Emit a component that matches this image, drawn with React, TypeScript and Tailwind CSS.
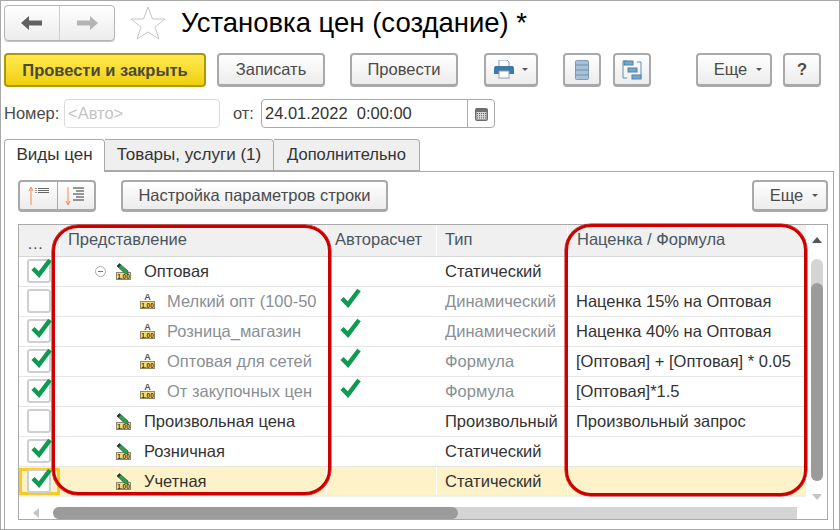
import type { ReactNode } from "react";

const rows = [
  { level: 0, tree: true, on: true, icon: "pen", name: "Оптовая", auto: false, type: "Статический", formula: "" },
  { level: 1, on: false, icon: "a", name: "Мелкий опт (100-50", auto: true, type: "Динамический", formula: "Наценка 15% на Оптовая" },
  { level: 1, on: true, icon: "a", name: "Розница_магазин", auto: true, type: "Динамический", formula: "Наценка 40% на Оптовая" },
  { level: 1, on: true, icon: "a", name: "Оптовая для сетей", auto: true, type: "Формула", formula: "[Оптовая] + [Оптовая] * 0.05" },
  { level: 1, on: true, icon: "a", name: "От закупочных цен", auto: true, type: "Формула", formula: "[Оптовая]*1.5" },
  { level: 0, on: false, icon: "pen", name: "Произвольная цена", auto: false, type: "Произвольный", formula: "Произвольный запрос" },
  { level: 0, on: true, icon: "pen", name: "Розничная", auto: false, type: "Статический", formula: "" },
  { level: 0, on: true, icon: "pen", name: "Учетная", auto: false, type: "Статический", formula: "", current: true },
];

const Check = ({ className }: { className: string }) => (
  <svg viewBox="0 0 21 21" className={className}>
    <path d="M2 11.5 L8 17.5 L19 3" fill="none" stroke="#0e9a50" strokeWidth="4.5" />
  </svg>
);

const PriceTag = () => (
  <svg width="15" height="8" viewBox="0 0 15 8" className="block shrink-0">
    <rect x="0.5" y="0.5" width="14" height="7" fill="#f5dc78" stroke="#8a8a6a" />
    <text x="7.5" y="6.5" textAnchor="middle" fontSize="6.5" fontWeight="700" fontFamily="Liberation Sans" fill="#333">1.00</text>
  </svg>
);

const RowIcon = ({ kind }: { kind: string }) =>
  kind === "pen" ? (
    <div className="relative w-[15px] h-[17px] flex flex-col justify-end shrink-0">
      <svg width="13" height="12" viewBox="0 0 13 12" className="absolute left-0 top-0">
        <path d="M1 3 L3.5 0.5 L12 8 L12 11 L9 10.5 Z" fill="#2f9e4f" stroke="#1f5f35" strokeWidth="0.7" />
        <path d="M1 3 L3.5 0.5 L5 2 L2.5 4.5 Z" fill="#333" />
      </svg>
      <PriceTag />
    </div>
  ) : (
    <div className="w-[15px] h-[15px] flex flex-col items-center justify-end shrink-0">
      <span className="text-[9px] leading-[8px] font-bold text-[#555]">A</span>
      <PriceTag />
    </div>
  );

const Btn = ({ className, children }: { className: string; children: ReactNode }) => (
  <div
    className={`shrink-0 flex items-center justify-center rounded-[4px] border-2 border-b-[3px] border-[#a9a9a9] bg-gradient-to-b from-white to-[#ececec] text-[16.5px] text-[#4a4a4a] ${className}`}
  >
    {children}
  </div>
);

const Caret = () => <span className="w-0 h-0 border-x-[3px] border-x-transparent border-t-[3px] border-t-[#555]" />;

export default function App() {
  return (
    <div className="relative w-[840px] h-[530px] overflow-hidden bg-white border border-[#a9a9a9] font-['Liberation_Sans',Arial,sans-serif]">
      {/* Header */}
      <div className="flex items-center h-[36px] mt-[4px] ml-[3px]">
        <div className="w-[111px] h-[36px] flex rounded-[4px] border border-[#b4b4b4] bg-gradient-to-b from-white to-[#ececec] shadow-[0_1px_0_#c4c4c4]">
          <div className="w-[55px] flex items-center justify-center border-r border-[#cfcfcf]">
            <svg width="22" height="14" viewBox="0 0 22 14">
              <path d="M0 7 L8 0 V4.5 H21 V9.5 H8 V14 Z" fill="#606060" />
            </svg>
          </div>
          <div className="flex-1 flex items-center justify-center">
            <svg width="22" height="14" viewBox="0 0 22 14">
              <path d="M22 7 L14 0 V4.5 H1 V9.5 H14 V14 Z" fill="#b4b4b4" />
            </svg>
          </div>
        </div>
        <svg width="36" height="34" viewBox="0 0 36 34" className="ml-[15px]">
          <path d="M18 1 L22.5 13 L35 13 L25 21 L29 33 L18 26 L7 33 L11 21 L1 13 L13.5 13 Z" fill="white" stroke="#c4c4c4" />
        </svg>
        <h1 className="ml-[15px] text-[27.5px] leading-[36px] text-black">Установка цен (создание) *</h1>
      </div>

      {/* Command bar */}
      <div className="flex mt-[12px] ml-[3px]">
        <div className="w-[202px] h-[34px] flex items-center justify-center rounded-[4px] border-2 border-[#b0960a] bg-gradient-to-b from-[#ffe94a] to-[#f0d000] text-[16.5px] font-bold text-[#4a4a3a]">
          Провести и закрыть
        </div>
        <Btn className="w-[108px] h-[34px] ml-[11px]">Записать</Btn>
        <Btn className="w-[108px] h-[34px] ml-[25px]">Провести</Btn>
        <Btn className="w-[54px] h-[34px] ml-[26px] gap-[8px]">
          <svg width="20" height="19" viewBox="0 0 20 19">
            <path d="M5 0 H13 L15 2 V7 H5 Z" fill="white" stroke="#8aa0b5" />
            <path d="M2 6 H18 Q20 6 20 8 V14 H15 V11 H5 V14 H0 V8 Q0 6 2 6 Z" fill="#3f79a8" />
            <rect x="5" y="11" width="10" height="7" fill="white" stroke="#8aa0b5" />
          </svg>
          <Caret />
        </Btn>
        <Btn className="w-[38px] h-[34px] ml-[25px]">
          <svg width="14" height="20" viewBox="0 0 14 20">
            <rect x="0.5" y="0.5" width="13" height="19" rx="1" fill="#a9c1d6" stroke="#7d9cb6" />
            <path d="M0 5 H14 M0 10 H14 M0 15 H14" stroke="#6f90ab" />
          </svg>
        </Btn>
        <Btn className="w-[38px] h-[34px] ml-[12px]">
          <svg width="20" height="20" viewBox="0 0 20 20">
            <path d="M5 1 H1 V18 H5 M15 2 H19 V18 H15" fill="none" stroke="#5f8fb5" />
            <rect x="2" y="1" width="9" height="4" fill="#7aa5c8" stroke="#4f82ab" />
            <rect x="6" y="8" width="9" height="4" fill="#7aa5c8" stroke="#4f82ab" />
            <rect x="10" y="15" width="9" height="4" fill="#7aa5c8" stroke="#4f82ab" />
          </svg>
        </Btn>
        <Btn className="w-[76px] h-[34px] ml-[45px] gap-[9px] pl-[8px]">
          Еще <Caret />
        </Btn>
        <Btn className="w-[38px] h-[34px] ml-[11px] font-bold">?</Btn>
      </div>

      {/* Number and date */}
      <div className="flex items-center h-[29px] mt-[12px] ml-[3px] text-[16.5px] text-[#4a4a4a]">
        <span className="w-[60px]">Номер:</span>
        <div className="w-[156px] h-[29px] flex items-center pl-[3px] rounded-[4px] border border-[#dcdcdc] text-[#c4c4c4]">&lt;Авто&gt;</div>
        <span className="ml-[13px] w-[28px]">от:</span>
        <div className="w-[234px] h-[29px] flex rounded-[4px] border border-[#a9a9a9] text-[#333]">
          <span className="flex-1 flex items-center pl-[3px] whitespace-pre">24.01.2022  0:00:00</span>
          <span className="w-[27px] flex items-center justify-center border-l border-[#a9a9a9]">
            <svg width="13" height="14" viewBox="0 0 13 14">
              <rect x="0" y="1" width="13" height="13" rx="2" fill="#6e6e6e" />
              <rect x="1.5" y="5" width="10" height="7.5" fill="#d8d8d8" />
              <path d="M2 6.5 H11 M2 8.7 H11 M2 10.9 H11" stroke="#555" strokeDasharray="1 1" />
            </svg>
          </span>
        </div>
      </div>

      {/* Tabs */}
      <div className="flex h-[33px] mt-[11px] ml-[3px] text-[16.5px] text-[#333] relative z-10">
        <div className="w-[101px] h-[33px] pb-[2px] flex items-center justify-center bg-white border border-b-0 border-[#a9a9a9] rounded-t-[4px] text-[17px]">Виды цен</div>
        <div className="w-[169px] h-[32px] pb-[1px] flex items-center justify-center bg-[#efefef] border border-l-0 border-[#a9a9a9] rounded-tr-[4px] text-[17px]">Товары, услуги (1)</div>
        <div className="w-[146px] h-[32px] pb-[1px] flex items-center justify-center bg-[#efefef] border border-l-0 border-[#a9a9a9] rounded-tr-[4px]">Дополнительно</div>
      </div>

      {/* Tab page */}
      <div className="w-[830px] h-[358px] ml-[3px] -mt-[1px] border border-b-0 border-[#a9a9a9] pl-[13px] pr-[5px] pt-[8px]">
        <div className="flex">
          <div className="w-[78px] h-[32px] shrink-0 flex rounded-[4px] border-2 border-b-[3px] border-[#a9a9a9] bg-gradient-to-b from-white to-[#ececec]">
            <div className="w-[38px] flex items-center justify-center border-r border-[#a9a9a9]">
              <svg width="24" height="20" viewBox="0 0 24 20">
                <path d="M4 19 V2 M2 5 L4 1 L6 5" fill="none" stroke="#f08a4a" />
                <path d="M11 2.5 H22 M11 4.5 H22 M11 6.5 H22" stroke="#666" />
                <path d="M8 2.5 H10 M8 4.5 H10 M8 6.5 H10" stroke="#999" />
              </svg>
            </div>
            <div className="flex-1 flex items-center justify-center">
              <svg width="24" height="20" viewBox="0 0 24 20">
                <path d="M4 1 V18 M2 15 L4 19 L6 15" fill="none" stroke="#f08a4a" />
                <path d="M9 2 H20 M12 5 H20 M9 8 H20 M12 11 H20 M9 14 H20" stroke="#777" strokeWidth="1.5" />
              </svg>
            </div>
          </div>
          <Btn className="w-[267px] ml-[25px] h-[32px]">Настройка параметров строки</Btn>
          <Btn className="w-[76px] ml-[364px] h-[32px] gap-[9px] pl-[8px]">
            Еще <Caret />
          </Btn>
        </div>

        {/* Table */}
        <div className="relative w-[810px] h-[296px] mt-[12px] border border-[#a9a9a9] text-[16.5px]">
          <div className="flex h-[276px]">
            <div className="w-[787px]">
              <div className="flex h-[32px] bg-[#f0f0f0] border-b border-[#d6d6d6] text-[#4a5560]">
                <div className="w-[41px] pl-[8px] pt-[5px] flex items-center border-r border-white">…</div>
                <div className="w-[267px] pl-[8px] pt-[2px] flex items-start border-r border-white">Представление</div>
                <div className="w-[110px] pl-[8px] pt-[2px] flex items-start border-r border-white">Авторасчет</div>
                <div className="w-[131px] pl-[8px] pt-[2px] flex items-start border-r border-white">Тип</div>
                <div className="flex-1 pl-[9px] pt-[2px] flex items-start">Наценка / Формула</div>
              </div>
              {rows.map((row) => (
                <div key={row.name} className={`flex h-[30px] ${row.current ? "bg-[#fdf2c8] border-b-2 border-[#eeeeee]" : "border-b border-[#e6e6e6]"}`}>
                  <div className="relative w-[41px] pl-[8px] pt-[2px]">
                    {row.current && <div className="absolute left-0 top-[1px] w-[41px] h-[27px] border-[3px] border-[#fbc920]" />}
                    <div className="relative w-[24px] h-[24px] bg-white rounded-[3px] border-2 border-[#cfcfcf]">
                      {row.on && <Check className="absolute -top-[4px] left-[2px] w-[21px] h-[21px]" />}
                    </div>
                  </div>
                  <div className={`w-[267px] flex items-center ${row.current ? "border-r border-white" : ""} ${row.level === 1 ? "pl-[80px] text-[#8a8f95]" : row.tree ? "pl-[35px] text-[#333]" : "pl-[56px] text-[#333]"}`}>
                    {row.tree && (
                      <span className="w-[11px] h-[11px] mr-[10px] rounded-full border border-[#aaa] flex items-center justify-center">
                        <span className="w-[5px] h-px bg-[#777]" />
                      </span>
                    )}
                    <RowIcon kind={row.icon} />
                    <span className={`whitespace-nowrap ${row.level === 1 ? "ml-[12px]" : "ml-[13px]"}`}>{row.name}</span>
                  </div>
                  <div className={`w-[110px] pl-[13px] ${row.current ? "border-r border-white" : ""}`}>
                    {row.auto && <Check className="w-[21px] h-[21px]" />}
                  </div>
                  <div className={`w-[131px] pl-[8px] flex items-center whitespace-nowrap overflow-hidden ${row.current ? "border-r border-white" : ""} ${row.level === 1 ? "text-[#8a8f95]" : "text-[#333]"}`}>
                    {row.type}
                  </div>
                  <div className="flex-1 pl-[8px] flex items-center whitespace-nowrap text-[#333]">{row.formula}</div>
                </div>
              ))}
            </div>
            {/* Vertical scrollbar */}
            <div className="flex-1 flex flex-col items-center">
              <span className="mt-[12px] w-0 h-0 border-x-[5px] border-x-transparent border-b-[6px] border-b-[#555]" />
              <div className="mt-[16px] w-[12px] h-[222px] rounded-full bg-[#d4d4d4] flex flex-col justify-end">
                <div className="w-[12px] h-[198px] rounded-full bg-[#9b9b9b]" />
              </div>
              <span className="mt-[13px] w-0 h-0 border-x-[5px] border-x-transparent border-t-[6px] border-t-[#c4c4c4]" />
            </div>
          </div>
          {/* Horizontal scrollbar */}
          <div className="flex items-center mt-[6px] h-[12px] pl-[14px]">
            <span className="w-0 h-0 border-y-[5px] border-y-transparent border-r-[6px] border-r-[#c4c4c4]" />
            <div className="ml-[14px] w-[744px] h-[12px] rounded-l-full bg-[#d4d4d4]">
              <div className="w-[405px] h-[12px] rounded-full bg-[#9b9b9b]" />
            </div>
          </div>

          {/* Red callouts */}
          <div className="absolute left-[33px] top-0 w-[279px] h-[270px] rounded-[26px] border-[3px] border-[#cc0000] shadow-[0_0_0_0.5px_#cc0000] pointer-events-none" />
          <div className="absolute left-[546px] -top-[1px] w-[242px] h-[272px] rounded-[26px] border-[3px] border-[#cc0000] shadow-[0_0_0_0.5px_#cc0000] pointer-events-none" />
        </div>
      </div>
    </div>
  );
}
